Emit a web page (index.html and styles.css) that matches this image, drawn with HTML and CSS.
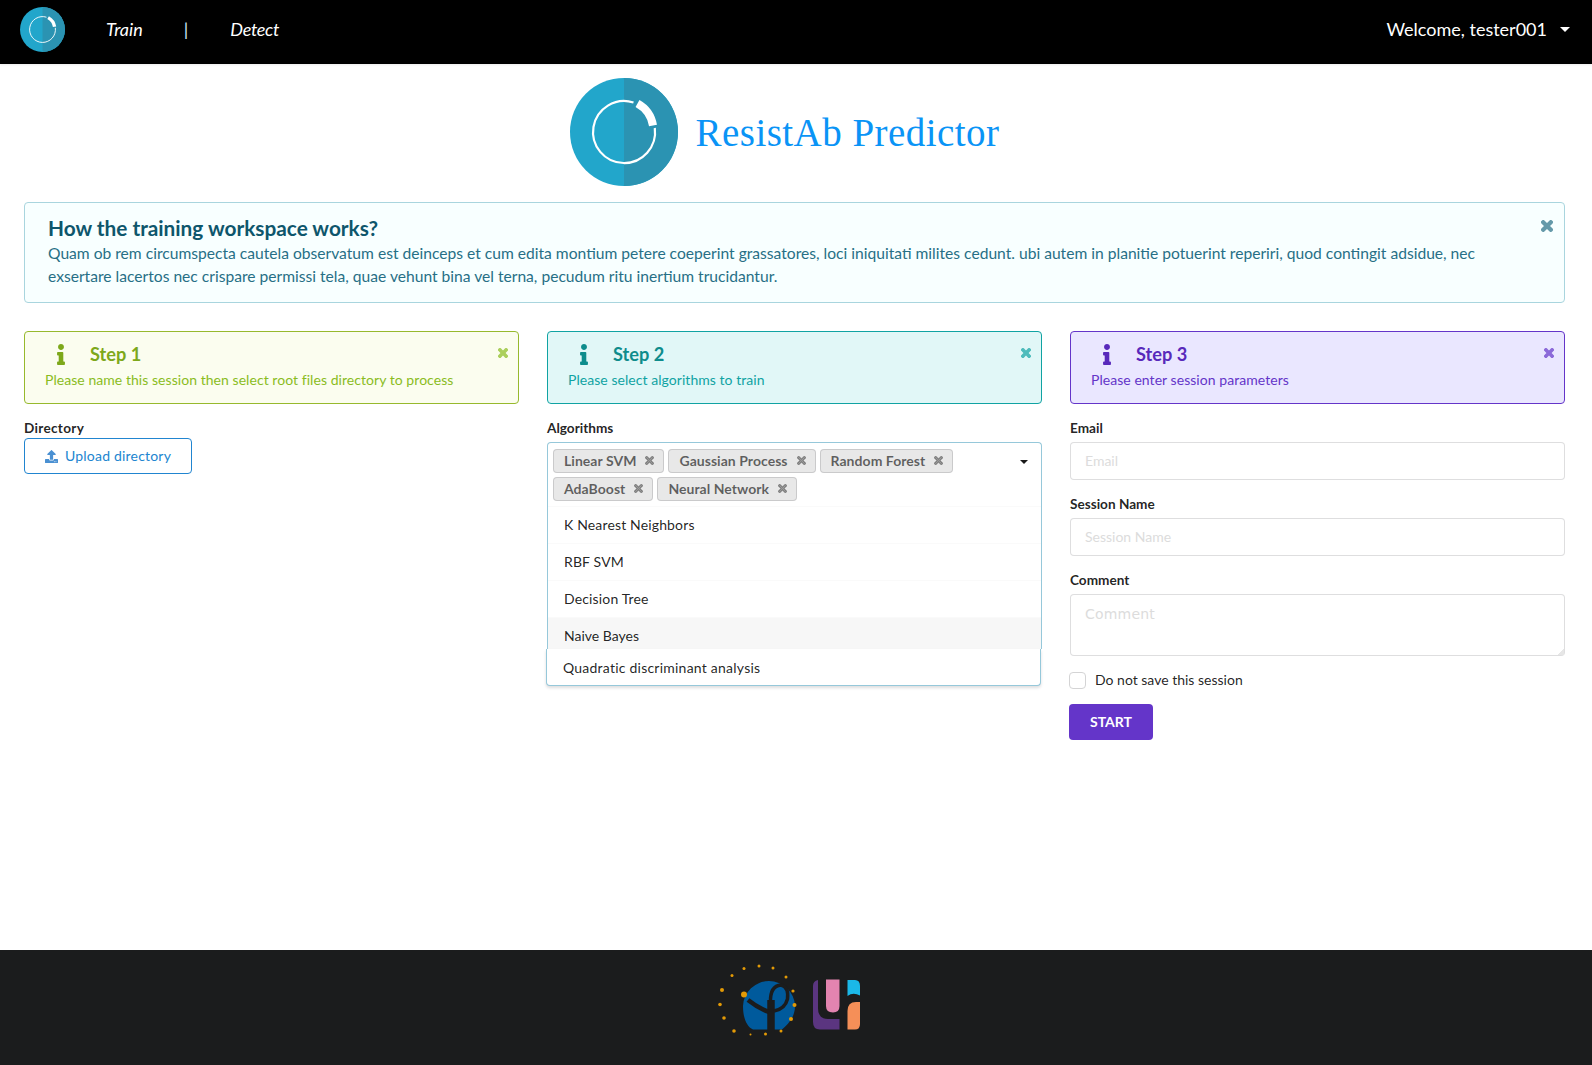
FILE: index.html
```html
<!DOCTYPE html>
<html lang="en">
<head>
<meta charset="utf-8">
<title>ResistAb Predictor</title>
<link rel="stylesheet" href="styles.css">
</head>
<body>
<svg class="defs" width="0" height="0" aria-hidden="true">
  <defs>
    <symbol id="i-info" viewBox="0 0 192 512"><path d="M20 424.229h20V279.771H20c-11.046 0-20-8.954-20-20V212c0-11.046 8.954-20 20-20h112c11.046 0 20 8.954 20 20v212.229h20c11.046 0 20 8.954 20 20V492c0 11.046-8.954 20-20 20H20c-11.046 0-20-8.954-20-20v-47.771c0-11.046 8.954-20 20-20zM96 0C56.235 0 24 32.235 24 72s32.235 72 72 72 72-32.235 72-72S135.764 0 96 0z"/></symbol>
    <symbol id="i-x" viewBox="-20 60 392 392"><path stroke="currentColor" stroke-width="44" d="M242.72 256l100.07-100.07c12.28-12.28 12.28-32.19 0-44.48l-22.24-22.24c-12.28-12.28-32.19-12.28-44.48 0L176 189.28 75.93 89.21c-12.28-12.28-32.19-12.28-44.48 0L9.21 111.45c-12.28 12.28-12.28 32.19 0 44.48L109.28 256 9.21 356.07c-12.28 12.28-12.28 32.19 0 44.48l22.24 22.24c12.28 12.28 32.2 12.28 44.48 0L176 322.72l100.07 100.07c12.28 12.28 32.2 12.28 44.48 0l22.24-22.24c12.28-12.28 12.28-32.19 0-44.48L242.72 256z"/></symbol>
    <symbol id="i-logo" viewBox="0 0 108 108">
      <circle cx="54" cy="54" r="54" fill="#22a6cb"/>
      <path d="M54 0a54 54 0 0 1 0 108z" fill="#2b93b2"/>
      <path d="M63.500 24.500A31 31 0 1 0 84.800 50" fill="none" stroke="#fff" stroke-width="2.200"/>
      <path d="M67.500 25.500A31 31 0 0 1 83 47.500" fill="none" stroke="#fff" stroke-width="8"/>
    </symbol>
  </defs>
</svg>

<header class="topbar">
  <svg class="topbar-logo"><use href="#i-logo"/></svg>
  <nav class="topnav">
    <a class="topnav-link">Train</a>
    <span class="topnav-sep">|</span>
    <a class="topnav-link topnav-link-tight">Detect</a>
  </nav>
  <div class="user">Welcome, tester001<span class="user-caret"></span></div>
</header>

<main class="page">
  <div class="brand">
    <svg class="brand-logo"><use href="#i-logo"/></svg>
    <h1 class="brand-title">ResistAb Predictor</h1>
  </div>

  <section class="intro">
    <svg class="close intro-close"><use href="#i-x"/></svg>
    <h2 class="intro-title">How the training workspace works?</h2>
    <p class="intro-text">Quam ob rem circumspecta cautela observatum est deinceps et cum edita montium petere coeperint grassatores, loci iniquitati milites cedunt. ubi autem in planitie potuerint reperiri, quod contingit adsidue, nec exsertare lacertos nec crispare permissi tela, quae vehunt bina vel terna, pecudum ritu inertium trucidantur.</p>
  </section>

  <div class="columns">
    <section class="column">
      <div class="step step-olive">
        <svg class="close step-close"><use href="#i-x"/></svg>
        <div class="step-head"><svg class="step-icon"><use href="#i-info"/></svg><span class="step-title">Step 1</span></div>
        <p class="step-text">Please name this session then select root files directory to process</p>
      </div>
      <label class="field-label field-label-wide">Directory</label>
      <button class="upload" type="button">
        <svg class="upload-icon" viewBox="0 0 512 512"><path d="M296 384h-80c-13.3 0-24-10.7-24-24V192h-87.7c-17.8 0-26.7-21.5-14.1-34.1L242.3 5.7c7.5-7.5 19.8-7.5 27.3 0l152.2 152.2c12.6 12.6 3.7 34.1-14.1 34.1H320v168c0 13.3-10.7 24-24 24zm216-8v112c0 13.3-10.7 24-24 24H24c-13.3 0-24-10.7-24-24V376c0-13.3 10.7-24 24-24h136v8c0 30.9 25.1 56 56 56h80c30.9 0 56-25.1 56-56v-8h136c13.3 0 24 10.7 24 24zm-124 88c0-11-9-20-20-20s-20 9-20 20 9 20 20 20 20-9 20-20zm64 0c0-11-9-20-20-20s-20 9-20 20 9 20 20 20 20-9 20-20z"/></svg>
        Upload directory
      </button>
    </section>

    <section class="column">
      <div class="step step-teal">
        <svg class="close step-close"><use href="#i-x"/></svg>
        <div class="step-head"><svg class="step-icon"><use href="#i-info"/></svg><span class="step-title">Step 2</span></div>
        <p class="step-text">Please select algorithms to train</p>
      </div>
      <label class="field-label">Algorithms</label>
      <div class="select">
        <div class="select-box">
          <span class="chip">Linear SVM<svg class="chip-x"><use href="#i-x"/></svg></span>
          <span class="chip">Gaussian Process<svg class="chip-x"><use href="#i-x"/></svg></span>
          <span class="chip">Random Forest<svg class="chip-x"><use href="#i-x"/></svg></span>
          <span class="chip">AdaBoost<svg class="chip-x"><use href="#i-x"/></svg></span>
          <span class="chip">Neural Network<svg class="chip-x"><use href="#i-x"/></svg></span>
          <span class="select-caret"></span>
        </div>
        <div class="option">K Nearest Neighbors</div>
        <div class="option">RBF SVM</div>
        <div class="option">Decision Tree</div>
        <div class="option option-hover">Naive Bayes</div>
      </div>
      <div class="select-extra">Quadratic discriminant analysis</div>
    </section>

    <section class="column">
      <div class="step step-violet">
        <svg class="close step-close"><use href="#i-x"/></svg>
        <div class="step-head"><svg class="step-icon"><use href="#i-info"/></svg><span class="step-title">Step 3</span></div>
        <p class="step-text">Please enter session parameters</p>
      </div>
      <label class="field-label">Email</label>
      <input class="input" type="text" placeholder="Email">
      <label class="field-label field-next">Session Name</label>
      <input class="input" type="text" placeholder="Session Name">
      <label class="field-label field-next">Comment</label>
      <textarea class="textarea" placeholder="Comment"></textarea>
      <div class="check"><span class="check-box"></span><span class="check-label">Do not save this session</span></div>
      <button class="start" type="button">START</button>
    </section>
  </div>
</main>

<footer class="footer">
  <svg class="footer-logos" viewBox="0 0 212 100" width="212" height="100">
    <path d="M79 31a26 26 0 0 1 26 25c0 12-8 19-13 23.500H63c-7-3-10-13-10-23.500a26 26 0 0 1 26-25z" fill="#005a9c"/>
    <path d="M81 82V50" fill="none" stroke="#1b1c1d" stroke-width="7.500"/>
    <path d="M58 50Q68 58 79 62" fill="none" stroke="#1b1c1d" stroke-width="4.500"/>
    <path d="M80.500 52Q80 36 91 35Q99 37 97.500 49Q95 59 84 61" fill="none" stroke="#1b1c1d" stroke-width="3.500"/>
    <g fill="#e39a06">
      <circle cx="54" cy="44.500" r="3"/><circle cx="32" cy="40" r="2"/><circle cx="42" cy="25.500" r="1.500"/><circle cx="54" cy="18.500" r="1.500"/><circle cx="69" cy="16" r="1.500"/><circle cx="83" cy="18" r="1.500"/><circle cx="96" cy="27" r="1.500"/><circle cx="103" cy="41" r="1.600"/><circle cx="104.500" cy="55" r="2"/><circle cx="101" cy="69" r="2"/><circle cx="91" cy="81" r="1.500"/><circle cx="75.500" cy="84" r="1.500"/><circle cx="60.500" cy="84.500" r="1"/><circle cx="44" cy="81" r="1.800"/><circle cx="34" cy="68" r="1.800"/><circle cx="30" cy="54.500" r="1.800"/>
    </g>
    <path d="M128 30Q123 31 123 36V72Q123 79.500 130 79.500H149.500V69H138Q128 69 128 58Z" fill="#5b3580"/>
    <path d="M136 29.500H149.500V56Q149.500 62.500 143 62.500Q136 62.500 136 56Z" fill="#e384b0"/>
    <path d="M157.500 30H165Q170 30 170 36V45.500Q163 42 157.500 46Z" fill="#1bb8e8"/>
    <path d="M157.500 79.500V61Q157.500 52 166 52H170V74Q170 79.500 165 79.500Z" fill="#f58f58"/>
  </svg>
</footer>
</body>
</html>
```

FILE: styles.css
```css
* { box-sizing: border-box; }
html, body { margin: 0; height: 100%; }
body {
  display: flex;
  flex-direction: column;
  min-height: 1065px;
  font-family: Lato, "Helvetica Neue", Arial, sans-serif;
  font-size: 14px;
  line-height: 20px;
  color: rgba(0, 0, 0, 0.87);
  background: #fff;
}
.defs { position: absolute; }

.topbar {
  flex: none;
  height: 64px;
  display: flex;
  align-items: center;
  padding: 0 22px 6px 20px;
  background: #000;
  color: #fff;
  font-size: 18px;
  box-shadow: 0 1px 2px rgba(0, 0, 0, 0.08);
}
.topbar-logo { width: 45px; height: 45px; flex: none; }
.topnav { display: flex; align-items: center; margin-left: 41px; font-size: 18px; font-style: italic; }
.topnav-link { color: #fff; }
.topnav-link-tight { letter-spacing: -0.3px; }
.topnav-sep { margin: 0 42px 0 41px; color: #cfe6ff; font-style: normal; }
.user { margin-left: auto; display: flex; align-items: center; }
.user-caret {
  width: 0; height: 0; margin-left: 13px; margin-top: 0;
  border-left: 5px solid transparent;
  border-right: 5px solid transparent;
  border-top: 5px solid #fff;
}

.page { flex: 1; padding: 0 27px 0 24px; }

.brand { display: flex; align-items: center; justify-content: center; height: 138px; padding: 0 20px 2px 0; }
.brand-logo { width: 108px; height: 108px; flex: none; }
.brand-title {
  margin: 2px 0 0 18px;
  font-family: "Liberation Serif", serif;
  font-weight: 400;
  font-size: 39px;
  line-height: 44px;
  letter-spacing: 0.46px;
  color: #0a94f6;
}

.intro {
  position: relative;
  height: 101px;
  padding: 12px 23px;
  background: #f8ffff;
  border: 1px solid #a9d5de;
  border-radius: 4px;
  color: #276f86;
}
.intro-title { margin: 0 0 2px; font-size: 20.800px; line-height: 25px; font-weight: 700; color: #0e566c; }
.intro-text { margin: 0; font-size: 15.620px; line-height: 23px; }

.close { position: absolute; fill: currentColor; opacity: 0.7; }
.intro-close { top: 17px; right: 11px; width: 12px; height: 12px; }

.columns { display: grid; grid-template-columns: repeat(3, 1fr); column-gap: 28px; margin-top: 28px; }
.column { min-width: 0; }

.step {
  position: relative;
  height: 73px;
  padding: 9px 20px 0;
  border: 1px solid;
  border-radius: 4px;
}
.step-head { display: flex; align-items: center; height: 26px; padding-left: 11px; }
.step-icon { width: 10px; height: 21px; fill: currentColor; flex: none; }
.step-title { margin-left: 24px; font-size: 18.200px; font-weight: 700; }
.step-text { margin: 3px 0 0; font-size: 14px; line-height: 20px; letter-spacing: 0.05px; }
.step-close { top: 16px; right: 10px; width: 10px; height: 10px; }
.step-olive { background: #fbfdef; border-color: #97b92d; color: #8abc1e; }
.step-olive .step-head { color: #7da81a; }
.step-teal { background: #e1f7f7; border-color: #10a3a3; color: #10a3a3; }
.step-teal .step-head { color: #0e8c8c; }
.step-violet { background: #eae7ff; border-color: #6435c9; color: #6435c9; }
.step-violet .step-head { color: #5829bb; }

.field-label { display: block; margin-top: 14px; font-size: 13.600px; line-height: 20px; height: 20px; font-weight: 700; color: rgba(0, 0, 0, 0.87); }
.field-label-wide { letter-spacing: 0.3px; }
.field-next { margin-top: 16px; height: 18px; line-height: 17px; }

.upload {
  display: flex;
  align-items: center;
  height: 36px;
  padding: 0 20px;
  background: #fff;
  border: 1px solid #2185d0;
  border-radius: 4px;
  font: inherit;
  letter-spacing: 0.2px;
  color: #2185d0;
}
.upload-icon { width: 13px; height: 13px; margin-right: 7px; fill: #4a90d2; }

.select {
  margin-top: 4px;
  border: 1px solid #96c8da;
  border-bottom: 0;
  border-radius: 4px 4px 0 0;
  overflow: hidden;
}
.select-box {
  position: relative;
  display: flex;
  flex-wrap: wrap;
  gap: 4px;
  padding: 5.500px 82px 5px 5px;
  height: 63px;
  align-content: flex-start;
}
.chip {
  display: inline-flex;
  align-items: center;
  height: 24px;
  padding: 0 10px 0 11px;
  background: #e8e8e8;
  border-radius: 4px;
  box-shadow: 0 0 0 1px rgba(34, 36, 38, 0.15) inset;
  font-size: 14px;
  letter-spacing: 0.04px;
  font-weight: 700;
  color: rgba(0, 0, 0, 0.6);
}
.chip-x { width: 9px; height: 9px; margin-left: 9px; fill: rgba(0, 0, 0, 0.33); color: rgba(0, 0, 0, 0.33); }
.select-caret {
  position: absolute; right: 13px; top: 17px;
  width: 0; height: 0;
  border-left: 4px solid transparent;
  border-right: 4px solid transparent;
  border-top: 4px solid rgba(0, 0, 0, 0.9);
}
.option { height: 37px; padding: 8px 16px; border-top: 1px solid #fafafa; letter-spacing: 0.15px; color: rgba(0, 0, 0, 0.87); }
.option-hover { height: 32px; background: #f7f7f7; letter-spacing: 0; }
.select-extra {
  height: 37px;
  margin: 0 1px 0 -1px;
  padding: 9px 16px;
  background: #fff;
  border: 1px solid #96c8da;
  border-top: 0;
  border-radius: 0 0 4px 4px;
  letter-spacing: 0.23px;
  box-shadow: 0 2px 3px rgba(34, 36, 38, 0.15);
}

.input, .textarea {
  display: block;
  width: 100%;
  background: #fff;
  border: 1px solid rgba(34, 36, 38, 0.15);
  border-radius: 4px;
  color: rgba(0, 0, 0, 0.87);
  outline: 0;
}
.input { height: 38px; margin-top: 4px; padding: 0 14px 2px; font: 14px/20px Lato, sans-serif; }
.textarea { height: 62px; margin-top: 4px; padding: 9px 14px; font: 14px/20px "DejaVu Sans", sans-serif; letter-spacing: 0.2px; resize: vertical; }
.textarea::-webkit-resizer { background: linear-gradient(135deg, transparent 80%, #e6e6e6 80%); }
.input::placeholder, .textarea::placeholder { color: #dcdcdc; opacity: 1; }

.check { display: flex; align-items: center; margin: 15px 0 0 -1px; height: 18px; }
.check-box { width: 17px; height: 17px; background: #fff; border: 1px solid #d4d4d5; border-radius: 4px; }
.check-label { margin-left: 9px; }
.start {
  display: block;
  width: 84px;
  height: 36px;
  margin: 15px 0 0 -1px;
  padding: 0 0 2px;
  background: #6435c9;
  border: 0;
  border-radius: 4px;
  font: 700 14px Lato, sans-serif;
  color: #fff;
}

.footer { flex: none; height: 115px; display: flex; justify-content: center; background: #1b1c1d; }
.footer-logos { display: block; }
```
